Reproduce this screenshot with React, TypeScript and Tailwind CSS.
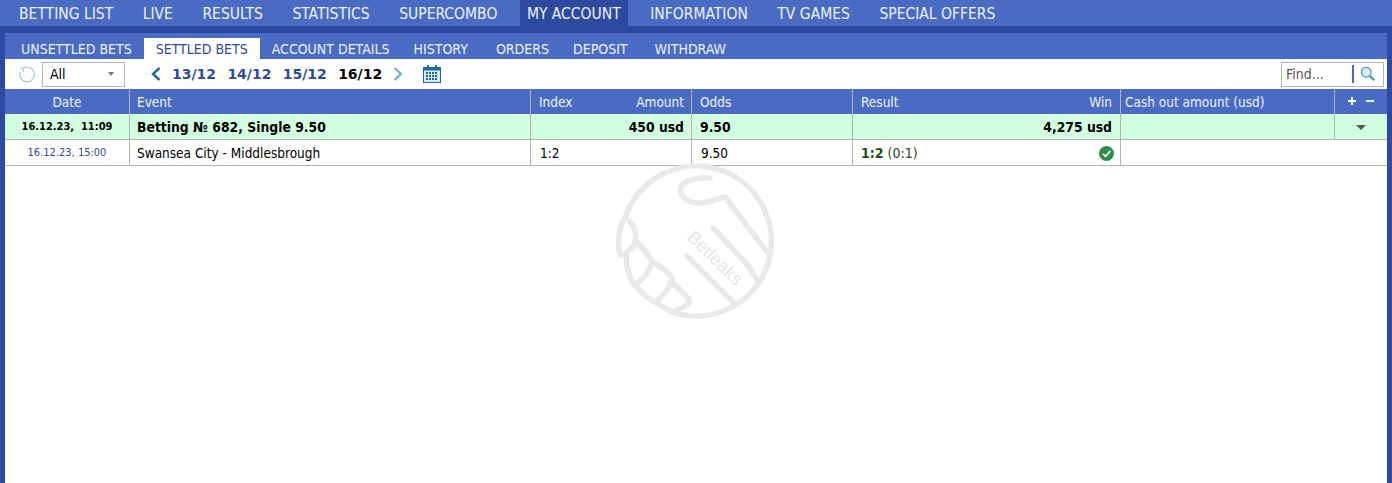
const mainNav = ["BETTING LIST", "LIVE", "RESULTS", "STATISTICS", "SUPERCOMBO", "MY ACCOUNT", "INFORMATION", "TV GAMES", "SPECIAL OFFERS"];
const subNav = ["UNSETTLED BETS", "SETTLED BETS", "ACCOUNT DETAILS", "HISTORY", "ORDERS", "DEPOSIT", "WITHDRAW"];
const dates = ["13/12", "14/12", "15/12"];

const Watermark = () => (
  <svg viewBox="0 0 160 160" className="absolute left-[616px] top-[163px] h-[160px] w-[160px]" fill="none" stroke="#e9e9e9" strokeWidth="5.5" strokeLinecap="round" strokeLinejoin="round">
    <path d="M9 55A75 75 0 1 1 56 149" />
    <path d="M94 15C80 14 68 18 65 24C62 31 70 39 81 40C92 41 102 35 109 34L151 89" />
    <path d="M97 65L131 101L143 120" />
    <path d="M71 93L94 116L118 140" />
    <path d="M9 55C3 62 1 82 4 92C8 92 10 91 11 89C16 86 20 81 20 75C20 66 15 58 9 55Z" />
    <path d="M19 77C26 84 33 92 36 99C34 108 28 116 19 122C13 116 9 100 11 90" />
    <path d="M36 99C44 103 52 108 56 115C54 125 48 133 39 139C32 136 24 128 19 122" />
    <path d="M56 120C62 125 70 130 74 139C68 145 62 147 56 149C50 146 45 143 39 139" />
    <text x="0" y="0" transform="translate(70 75.5) rotate(44)" fill="#e6e6e6" stroke="none" fontSize="18" fontFamily="'Liberation Sans', sans-serif">Betleaks</text>
  </svg>
);

const Calendar = () => (
  <svg viewBox="0 0 20 20" className="h-5 w-5">
    <rect x="1.5" y="3.5" width="17" height="15" fill="#dcebf7" stroke="#1f6aa5" />
    <rect x="1" y="3" width="18" height="3.5" fill="#1f6aa5" />
    <rect x="5" y="1" width="2" height="4" fill="#1f6aa5" />
    <rect x="13" y="1" width="2" height="4" fill="#1f6aa5" />
    {[8, 11, 14].map((y) =>
      [4, 7, 10, 13].map((x) => <rect key={`${x}-${y}`} x={x} y={y} width="2" height="2" fill="#1f6aa5" />)
    )}
  </svg>
);

const subTabClass = (item: string) => {
  if (item === "SETTLED BETS") return "px-[12px] bg-white text-[#2d4a9e]";
  if (item === "HISTORY") return "pl-[12px] pr-[16px]";
  if (item === "DEPOSIT") return "pl-[12px] pr-[15px]";
  return "px-[12px]";
};

const App = () => {
  return (
    <div className="relative h-[483px] overflow-hidden bg-[#2d4a9e] font-['DejaVu_Sans_Condensed',sans-serif] text-[13.5px] text-black">
      <div className="flex h-[26px] items-stretch gap-[15.5px] bg-[#4a6bc4] pl-[12px] text-[15.5px] text-[#eef4ff]">
        {mainNav.map((item) => (
          <div key={item} className={`flex items-center px-[7px] pt-[4px] ${item === "MY ACCOUNT" ? "bg-[#2d4a9e]" : ""}`}>
            {item}
          </div>
        ))}
      </div>

      <div className="mx-[5px] mt-[7px] h-[450px] bg-white">
        <div className="flex h-[26px] items-end bg-[#4a6bc4] pl-[4px] text-[14px] text-[#eef4ff]">
          {subNav.map((item) => (
            <div key={item} className={`flex h-[21px] items-center pt-[1px] ${subTabClass(item)}`}>
              {item}
            </div>
          ))}
        </div>

        <div className="flex h-[30px] items-center">
          <svg viewBox="0 0 18 18" className="ml-[13px] h-[18px] w-[18px]" fill="none" stroke="#a9cbe0" strokeWidth="1.2">
            <path d="M5 3.5A7.3 7.3 0 1 1 2.3 7" />
            <path d="M2 3L5.5 3.2L5.2 7" />
          </svg>
          <div className="ml-[6px] flex h-[25px] w-[83px] items-center justify-between border border-[#b5b5b5] pl-[7px] pr-[10px]">
            <span className="text-[14px]">All</span>
            <span className="h-0 w-0 border-x-[3px] border-t-[4px] border-x-transparent border-t-[#777]" />
          </div>
          <svg viewBox="0 0 12 16" className="ml-[25px] h-[16px] w-[12px]" fill="none" stroke="#1f6aa5" strokeWidth="2.4">
            <path d="M9.5 2L3 8L9.5 14" />
          </svg>
          <div className="ml-[10px] flex gap-[11.3px] font-['DejaVu_Sans',sans-serif] text-[14px] font-bold text-[#2d4a9e]">
            {dates.map((d) => (
              <span key={d}>{d}</span>
            ))}
            <span className="text-black">16/12</span>
          </div>
          <svg viewBox="0 0 12 16" className="ml-[10px] h-[16px] w-[12px]" fill="none" stroke="#6aa7cf" strokeWidth="2">
            <path d="M2.5 2L9 8L2.5 14" />
          </svg>
          <div className="ml-[18px] flex">
            <Calendar />
          </div>
          <div className="ml-auto mr-[3px] flex h-[25px] w-[103px] items-center border border-[#b5b5b5] pl-[4px]">
            <span className="w-[66px] text-[14px] text-[#555]">Find...</span>
            <span className="h-[18px] w-[2px] bg-[#4a6bc4]" />
            <svg viewBox="0 0 18 18" className="ml-[6px] h-[16px] w-[16px]" fill="none" stroke="#4b93bf">
              <circle cx="7" cy="7" r="5.5" fill="#d9edf7" strokeWidth="1.3" />
              <path d="M11 11L16 16" strokeWidth="2.4" />
            </svg>
          </div>
        </div>

        <div className="grid h-[25px] grid-cols-[125px_401px_161px_161px_268px_214px_1fr] items-stretch bg-[#4a6bc4] text-[#eef4ff] [&>div]:pt-[2px]">
          <div className="flex items-center justify-center border-r border-[#b5b5b5]">Date</div>
          <div className="flex items-center border-r border-[#b5b5b5] pl-[7px]">Event</div>
          <div className="flex items-center justify-between border-r border-[#b5b5b5] px-[8px] pr-[7px]">
            <span>Index</span>
            <span>Amount</span>
          </div>
          <div className="flex items-center border-r border-[#b5b5b5] pl-[8px]">Odds</div>
          <div className="flex items-center justify-between border-r border-[#b5b5b5] pl-[8px] pr-[8px]">
            <span>Result</span>
            <span>Win</span>
          </div>
          <div className="flex items-center border-r border-[#b5b5b5] pl-[4px]">Cash out amount (usd)</div>
          <div className="flex items-center justify-center gap-[10px] pb-[4px]">
            <svg viewBox="0 0 8 8" className="h-[8px] w-[8px]" fill="#fff">
              <path d="M3 0H5V3H8V5H5V8H3V5H0V3H3Z" />
            </svg>
            <svg viewBox="0 0 8 8" className="h-[8px] w-[8px]" fill="#eef4ff">
              <path d="M0 3H8V5H0Z" />
            </svg>
          </div>
        </div>

        <div className="grid h-[26px] grid-cols-[125px_401px_161px_161px_268px_214px_1fr] items-stretch border-b border-[#b5b5b5] bg-[#d2ffdf] text-[13.8px] font-bold [&>div]:pt-[1px]">
          <div className="flex items-center justify-center border-r border-[#b5b5b5] text-[11px]">16.12.23,&nbsp; 11:09</div>
          <div className="flex items-center border-r border-[#b5b5b5] pl-[7px]">Betting № 682, Single 9.50</div>
          <div className="flex items-center justify-end border-r border-[#b5b5b5] pr-[7px]">450 usd</div>
          <div className="flex items-center border-r border-[#b5b5b5] pl-[8px]">9.50</div>
          <div className="flex items-center justify-end border-r border-[#b5b5b5] pr-[8px]">4,275 usd</div>
          <div className="border-r border-[#b5b5b5]" />
          <div className="flex items-center justify-center">
            <span className="h-0 w-0 border-x-[5px] border-t-[5px] border-x-transparent border-t-[#555]" />
          </div>
        </div>

        <div className="grid h-[26px] grid-cols-[125px_401px_161px_161px_268px_1fr] items-stretch border-b border-[#b5b5b5] [&>div]:pt-[1px]">
          <div className="flex items-center justify-center border-r border-[#b5b5b5] text-[11px] text-[#2d4a9e]">16.12.23, 15:00</div>
          <div className="flex items-center border-r border-[#b5b5b5] pl-[7px]">Swansea City - Middlesbrough</div>
          <div className="flex items-center border-r border-[#b5b5b5] pl-[9px]">1:2</div>
          <div className="flex items-center border-r border-[#b5b5b5] pl-[9px]">9.50</div>
          <div className="flex items-center justify-between border-r border-[#b5b5b5] pl-[8px] pr-[6px] text-[#1f4d0f]">
            <span className="text-[14px]"><b>1:2</b> (0:1)</span>
            <svg viewBox="0 0 16 16" className="h-[15px] w-[15px]">
              <circle cx="8" cy="8" r="8" fill="#2e8b4a" />
              <path d="M4 8.3L7 11L12 5.5" fill="none" stroke="#fff" strokeWidth="1.7" />
            </svg>
          </div>
          <div />
        </div>
      </div>

      <Watermark />
    </div>
  );
};

export default App;
